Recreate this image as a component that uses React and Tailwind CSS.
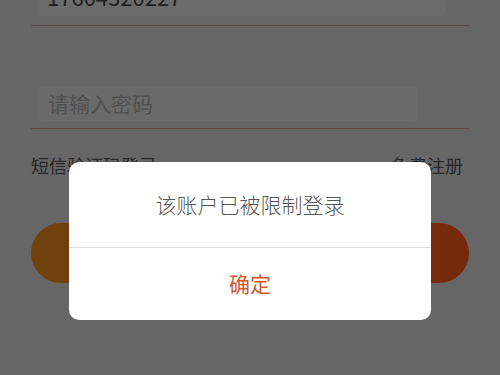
import React from "react";

const font = { fontFamily: '"Noto Sans CJK SC", "Noto Sans", sans-serif' };

const LoginPage = () => {
	return (
		<div className="h-[375px] w-[500px] overflow-hidden bg-[#666666] px-[31px]" style={font}>
			<div className="-mt-[24px] border-b border-[#5c4a40] pb-[9px]">
				<div className="ml-[6px] mr-[24px] flex h-[40px] items-center rounded bg-[#6b6b6b] px-[10px] text-[22px] text-[#1f1f1f]">
					17604320227
				</div>
			</div>
			<div className="mt-[60px] border-b border-[#5c4a40] pb-[7px]">
				<div className="ml-[6px] mr-[51px] flex h-[35px] items-center rounded bg-[#6a6a6a] px-[11px] text-[21px] text-[#505050]">
					请输入密码
				</div>
			</div>
			<div className="mt-[24px] flex items-center justify-between text-[18px] leading-[24px] text-[#262626]">
				<span>短信验证码登录</span>
				<span className="mr-[6px]">免费注册</span>
			</div>
			<div className="mt-[46px] h-[60px] rounded-full bg-gradient-to-r from-[#71420f] to-[#75290a]"></div>
		</div>
	);
};

const Dialog = () => {
	return (
		<div className="absolute left-[69px] top-[162px] w-[362px] overflow-hidden rounded-[10px] bg-white" style={font}>
			<div className="flex h-[85px] items-center justify-center text-[21px] font-light text-[#555555]">
				该账户已被限制登录
			</div>
			<div className="h-px bg-[#dddddd]"></div>
			<div className="flex h-[72px] items-center justify-center text-[21px] text-[#d4582e]">
				确定
			</div>
		</div>
	);
};

export default function App() {
	return (
		<div className="relative h-[375px] w-[500px] overflow-hidden">
			<LoginPage />
			<Dialog />
		</div>
	);
}
